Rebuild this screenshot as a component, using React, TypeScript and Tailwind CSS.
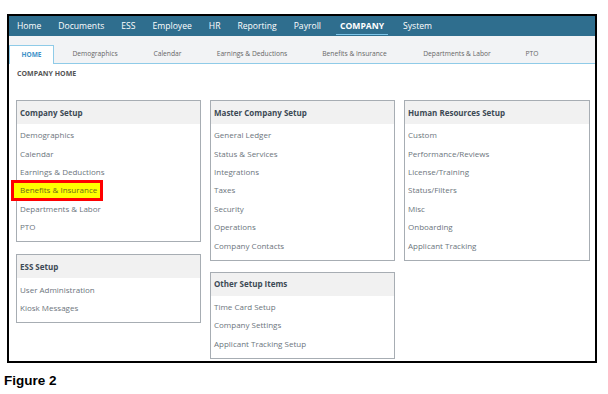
const navItems = ['Home', 'Documents', 'ESS', 'Employee', 'HR', 'Reporting', 'Payroll', 'COMPANY', 'System'];

const tabs = [
  { label: 'Demographics', w: 'w-[82px]' },
  { label: 'Calendar', w: 'w-[63px]' },
  { label: 'Earnings & Deductions', w: 'w-[106px]' },
  { label: 'Benefits & Insurance', w: 'w-[99px]' },
  { label: 'Departments & Labor', w: 'w-[106px]' },
  { label: 'PTO', w: 'w-[44px]' },
];

interface Section {
  title: string;
  items: string[];
}

function Card({ section, highlight }: { section: Section; highlight?: string }) {
  return (
    <div className="border border-[#a7adb3] bg-white">
      <div className="h-[23px] bg-[#f1f1f1] flex items-center px-[3px] text-[8px] font-bold text-[#3d4a55]">
        {section.title}
      </div>
      <div className="pt-[2px] pb-[5px]">
        {section.items.map((item) => (
          <div key={item} className="relative h-[18.4px] flex items-center px-[3px] text-[8px] text-[#6c757d]">
            {item === highlight && (
              <div className="absolute left-[-6px] top-[-1px] w-[92px] h-[21px] border-[3px] border-[#ff0000] bg-[#ffff00]" />
            )}
            <span className={item === highlight ? 'relative text-[#6b6b1a]' : ''}>{item}</span>
          </div>
        ))}
      </div>
    </div>
  );
}

export default function App() {
  const company = { title: 'Company Setup', items: ['Demographics', 'Calendar', 'Earnings & Deductions', 'Benefits & Insurance', 'Departments & Labor', 'PTO'] };
  const ess = { title: 'ESS Setup', items: ['User Administration', 'Kiosk Messages'] };
  const master = { title: 'Master Company Setup', items: ['General Ledger', 'Status & Services', 'Integrations', 'Taxes', 'Security', 'Operations', 'Company Contacts'] };
  const other = { title: 'Other Setup Items', items: ['Time Card Setup', 'Company Settings', 'Applicant Tracking Setup'] };
  const hr = { title: 'Human Resources Setup', items: ['Custom', 'Performance/Reviews', 'License/Training', 'Status/Filters', 'Misc', 'Onboarding', 'Applicant Tracking'] };

  return (
    <div className="w-[608px] h-[394px] bg-white pt-[14px] pl-[7px]" style={{ fontFamily: '"Open Sans", sans-serif' }}>
      <div className="w-[590px] h-[349px] border-2 border-black overflow-hidden">
        {/* top nav */}
        <div className="h-[20px] bg-[#2f6e8e] flex items-center pl-[8px] gap-[17px] text-[8.6px] text-white">
          {navItems.map((n) => (
            <span
              key={n}
              className={n === 'COMPANY' ? 'relative font-bold ml-[2px] mr-[2px]' : ''}
            >
              {n}
              {n === 'COMPANY' && (
                <span className="absolute left-[-4px] right-[-4px] bottom-[-3px] h-[1.5px] bg-[#7ec6ea]" />
              )}
            </span>
          ))}
        </div>

        {/* tabs */}
        <div className="h-[28px] bg-[#f2f3f5] flex items-end border-b border-[#8fcbe8]">
          <div className="w-[45px] bg-white border border-b-0 border-[#8fcbe8] flex items-center justify-center text-[6.5px] font-bold text-[#3e92c8] mb-[-1px] h-[19px]">
            HOME
          </div>
          {tabs.map((t) => (
            <div key={t.label} className={`${t.w} h-[18px] flex items-center justify-center text-[6.7px] text-[#666]`}>
              {t.label}
            </div>
          ))}
        </div>

        <div className="h-[20px] flex items-center pl-[8px] text-[7px] font-bold text-[#555]">COMPANY HOME</div>

        {/* columns */}
        <div className="flex gap-[9px] pl-[7px] pt-[16px]">
          <div className="w-[185px] flex flex-col gap-[12px]">
            <Card section={company} highlight="Benefits & Insurance" />
            <Card section={ess} />
          </div>
          <div className="w-[185px] flex flex-col gap-[11px]">
            <Card section={master} />
            <Card section={other} />
          </div>
          <div className="w-[186px] flex flex-col">
            <Card section={hr} />
          </div>
        </div>
      </div>
      <div className="mt-[8px] ml-[-3px] text-[13.5px] font-bold text-black" style={{ fontFamily: '"Liberation Sans", sans-serif' }}>
        Figure 2
      </div>
    </div>
  );
}
